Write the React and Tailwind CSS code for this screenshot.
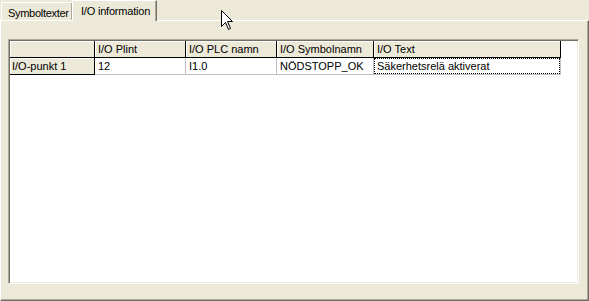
import React from "react";

const cols = [
  { label: "I/O Plint", w: "w-[91px]" },
  { label: "I/O PLC namn", w: "w-[91px]" },
  { label: "I/O Symbolnamn", w: "w-[97px]" },
  { label: "I/O Text", w: "w-[187px]" },
];

const row = ["12", "I1.0", "NÖDSTOPP_OK", "Säkerhetsrelä aktiverat"];

function Cursor() {
  return (
    <svg
      className="absolute left-[221px] top-[10px] z-20"
      width="13"
      height="21"
      viewBox="0 0 13 21"
    >
      <path
        d="M0.5 0.5 L0.5 16.5 L4.5 12.5 L7.5 19.5 L9.5 18.5 L6.5 11.5 L11.5 11.5 Z"
        fill="#fff"
        stroke="#000"
        strokeWidth="1"
        strokeLinejoin="miter"
      />
    </svg>
  );
}

export default function App() {
  return (
    <div className="relative w-[589px] h-[301px] overflow-hidden bg-[#ece9d8] text-[11px] leading-none text-black font-['Liberation_Sans',Arial,sans-serif]">
      <Cursor />

      {/* tab strip */}
      <div className="relative z-10 flex items-end h-[20px]">
        <div className="ml-[1px] w-[71px] h-[18px] border-l border-t border-white rounded-tl-[2px] shadow-[inset_-1px_0_0_#aca899] flex items-center pl-[6px] pt-[3px] tracking-[-0.3px] whitespace-nowrap overflow-hidden">
          Symboltexter
        </div>
        <div className="w-[85px] h-[21px] -mb-[1px] bg-[#ece9d8] border-l border-t border-white border-r border-r-[#716f64] rounded-tl-[2px] shadow-[inset_-1px_0_0_#aca899] flex items-start pl-[8px] pt-[5px] tracking-[-0.2px] whitespace-nowrap">
          I/O information
        </div>
      </div>

      {/* tab panel */}
      <div className="h-[281px] border-l border-t border-white border-r border-b border-r-[#716f64] border-b-[#716f64] shadow-[inset_-1px_-1px_0_#aca899] pt-[18px] pl-[7px]">
        {/* grid */}
        <div className="w-[571px] h-[245px] border border-t-[#aca899] border-l-[#aca899] border-r-white border-b-white shadow-[inset_1px_1px_0_#716f64,inset_-1px_-1px_0_#f1efe2] p-[1px]">
          <div className="w-full h-full bg-white">
            {/* header row */}
            <div className="flex h-[17px]">
              <div className="w-[85px] h-full bg-[#ece9d8] border-r border-b border-black shadow-[inset_1px_1px_0_#fff]" />
              {cols.map((c) => (
                <div
                  key={c.label}
                  className={`${c.w} h-full bg-[#ece9d8] border-r border-b border-black shadow-[inset_1px_1px_0_#fff] flex items-center pl-[3px] whitespace-nowrap overflow-hidden`}
                >
                  {c.label}
                </div>
              ))}
            </div>
            {/* data row */}
            <div className="flex h-[17px]">
              <div className="w-[85px] h-full bg-[#ece9d8] border-r border-b border-black shadow-[inset_1px_1px_0_#fff] flex items-center pl-[2px] whitespace-nowrap">
                I/O-punkt 1
              </div>
              {cols.map((c, i) => (
                <div
                  key={c.label}
                  className={`${c.w} h-full border-r border-b border-[#c0c0c0] flex items-center whitespace-nowrap overflow-hidden`}
                >
                  {i === 3 ? (
                    <div className="w-full h-full border border-dotted border-black flex items-center pl-[2px]">
                      {row[i]}
                    </div>
                  ) : (
                    <span className="pl-[3px]">{row[i]}</span>
                  )}
                </div>
              ))}
            </div>
          </div>
        </div>
      </div>
    </div>
  );
}
